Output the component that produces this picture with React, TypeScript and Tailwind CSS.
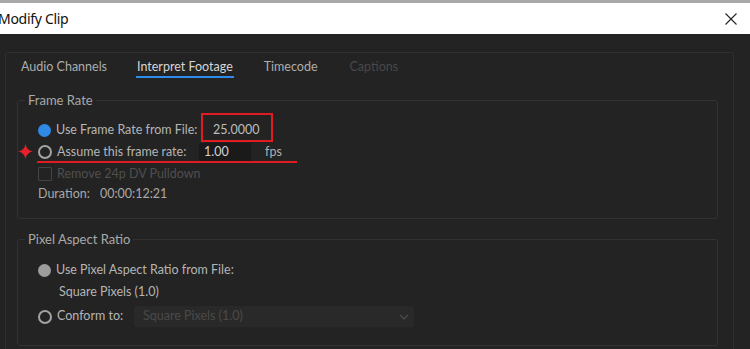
import React from 'react';

const Radio = ({ kind }: { kind: 'blue' | 'gray' | 'empty' }) => {
  if (kind === 'blue') return <span className="w-[13px] h-[13px] rounded-full bg-[#2f8ae5] shrink-0" />;
  if (kind === 'gray') return <span className="w-[13px] h-[13px] rounded-full bg-[#9d9d9d] shrink-0" />;
  return <span className="w-[14px] h-[14px] rounded-full border-2 border-[#a3a3a3] shrink-0" />;
};

const Star = () => (
  <svg width="15" height="15" viewBox="0 0 12 12" className="absolute left-[-20px] top-[3px]">
    <path d="M6 0 Q6.8 5.2 12 6 Q6.8 6.8 6 12 Q5.2 6.8 0 6 Q5.2 5.2 6 0Z" fill="#e8202a" />
  </svg>
);

const App = () => {
  return (
    <div className="w-[750px] h-[349px] overflow-hidden bg-[#232323] font-['Lato',sans-serif] text-[12.5px] text-[#b5b5b5]">
      {/* title bar */}
      <div className="h-[34px] bg-white border-t-[3px] border-[#a9a9a9] flex items-center justify-between pr-[13px]">
        <span className="ml-[-2px] font-['Noto_Sans',sans-serif] text-[14px] text-[#111] tracking-[-0.3px]">Modify Clip</span>
        <svg width="12" height="12" viewBox="0 0 12 12">
          <path d="M0.5 0.5 L11.5 11.5 M11.5 0.5 L0.5 11.5" stroke="#222" strokeWidth="1.1" />
        </svg>
      </div>

      <div className="pl-[5px] pt-[18px]">
        <div className="w-[729px] h-[300px] border border-[#2f2f2f] rounded-[3px] pl-[11px]">
          {/* tabs */}
          <div className="flex gap-[30px] pl-[4px] pt-[5px] text-[12.5px]">
            <span className="leading-[18px] text-[#adadad]">Audio Channels</span>
            <div className="flex flex-col">
              <span className="leading-[18px] text-[#d6d6d6]">Interpret Footage</span>
              <span className="h-[2px] bg-[#2d8ceb] -mx-px" />
            </div>
            <span className="leading-[18px] text-[#adadad] ml-[1px]">Timecode</span>
            <span className="leading-[18px] text-[#484848] ml-[2px]">Captions</span>
          </div>

          {/* Frame Rate */}
          <div className="relative mt-[22px] w-[701px] h-[119px] border border-[#323232] rounded-[3px] pl-[20px] pt-[18px]">
            <span className="absolute left-[7px] top-[-10px] px-[3px] bg-[#232323] text-[13px] leading-[18px] text-[#a9a9a9]">Frame Rate</span>

            <div className="relative flex items-center h-[22px]">
              <Radio kind="blue" />
              <span className="ml-[5px] w-[145px]">Use Frame Rate from File:</span>
              <span className="relative pl-[12px] text-[#bdbdbd]">
                25.0000
                <span className="absolute left-0 top-[-8px] w-[72px] h-[29px] border-2 border-[#e11b22]" />
              </span>
            </div>

            <div className="relative flex items-center h-[22px]">
              <Star />
              <Radio kind="empty" />
              <span className="ml-[5px] w-[142px]">Assume this frame rate:</span>
              <span className="w-[52px] h-[18px] bg-[#1a1a1a] pl-[5px] leading-[18px] text-[#d2d2d2]">1.00</span>
              <span className="ml-[14px] text-[#b0b0b0]">fps</span>
              <span className="absolute left-[-1px] bottom-[0px] w-[260px] h-[2px] bg-[#e11b22]" />
            </div>

            <div className="flex items-center h-[22px] text-[#4f4f4f]">
              <span className="w-[14px] h-[14px] border border-[#444] rounded-[1px] shrink-0" />
              <span className="ml-[5px]">Remove 24p DV Pulldown</span>
            </div>

            <div className="flex items-center h-[19px] text-[#a8a8a8]">
              <span className="w-[62px]">Duration:</span>
              <span>00:00:12:21</span>
            </div>
          </div>

          {/* Pixel Aspect Ratio */}
          <div className="relative mt-[20px] w-[701px] h-[107px] border border-[#323232] rounded-[3px] pl-[20px] pt-[19px]">
            <span className="absolute left-[7px] top-[-10px] px-[3px] bg-[#232323] text-[13px] leading-[18px] text-[#a9a9a9]">Pixel Aspect Ratio</span>

            <div className="flex items-center h-[22px]">
              <Radio kind="gray" />
              <span className="ml-[5px]">Use Pixel Aspect Ratio from File:</span>
            </div>
            <div className="h-[22px] pl-[21px] leading-[22px]">Square Pixels (1.0)</div>
            <div className="flex items-center h-[27px]">
              <Radio kind="empty" />
              <span className="ml-[5px] w-[77px]">Conform to:</span>
              <div className="w-[280px] h-[21px] bg-[#292929] rounded-[2px] flex items-center justify-between pl-[9px] pr-[5px] text-[#4a4a4a]">
                <span>Square Pixels (1.0)</span>
                <svg width="10" height="6" viewBox="0 0 10 6">
                  <path d="M1 1 L5 5 L9 1" stroke="#4a4a4a" strokeWidth="1.3" fill="none" />
                </svg>
              </div>
            </div>
          </div>
        </div>
      </div>
    </div>
  );
};

export default App;
